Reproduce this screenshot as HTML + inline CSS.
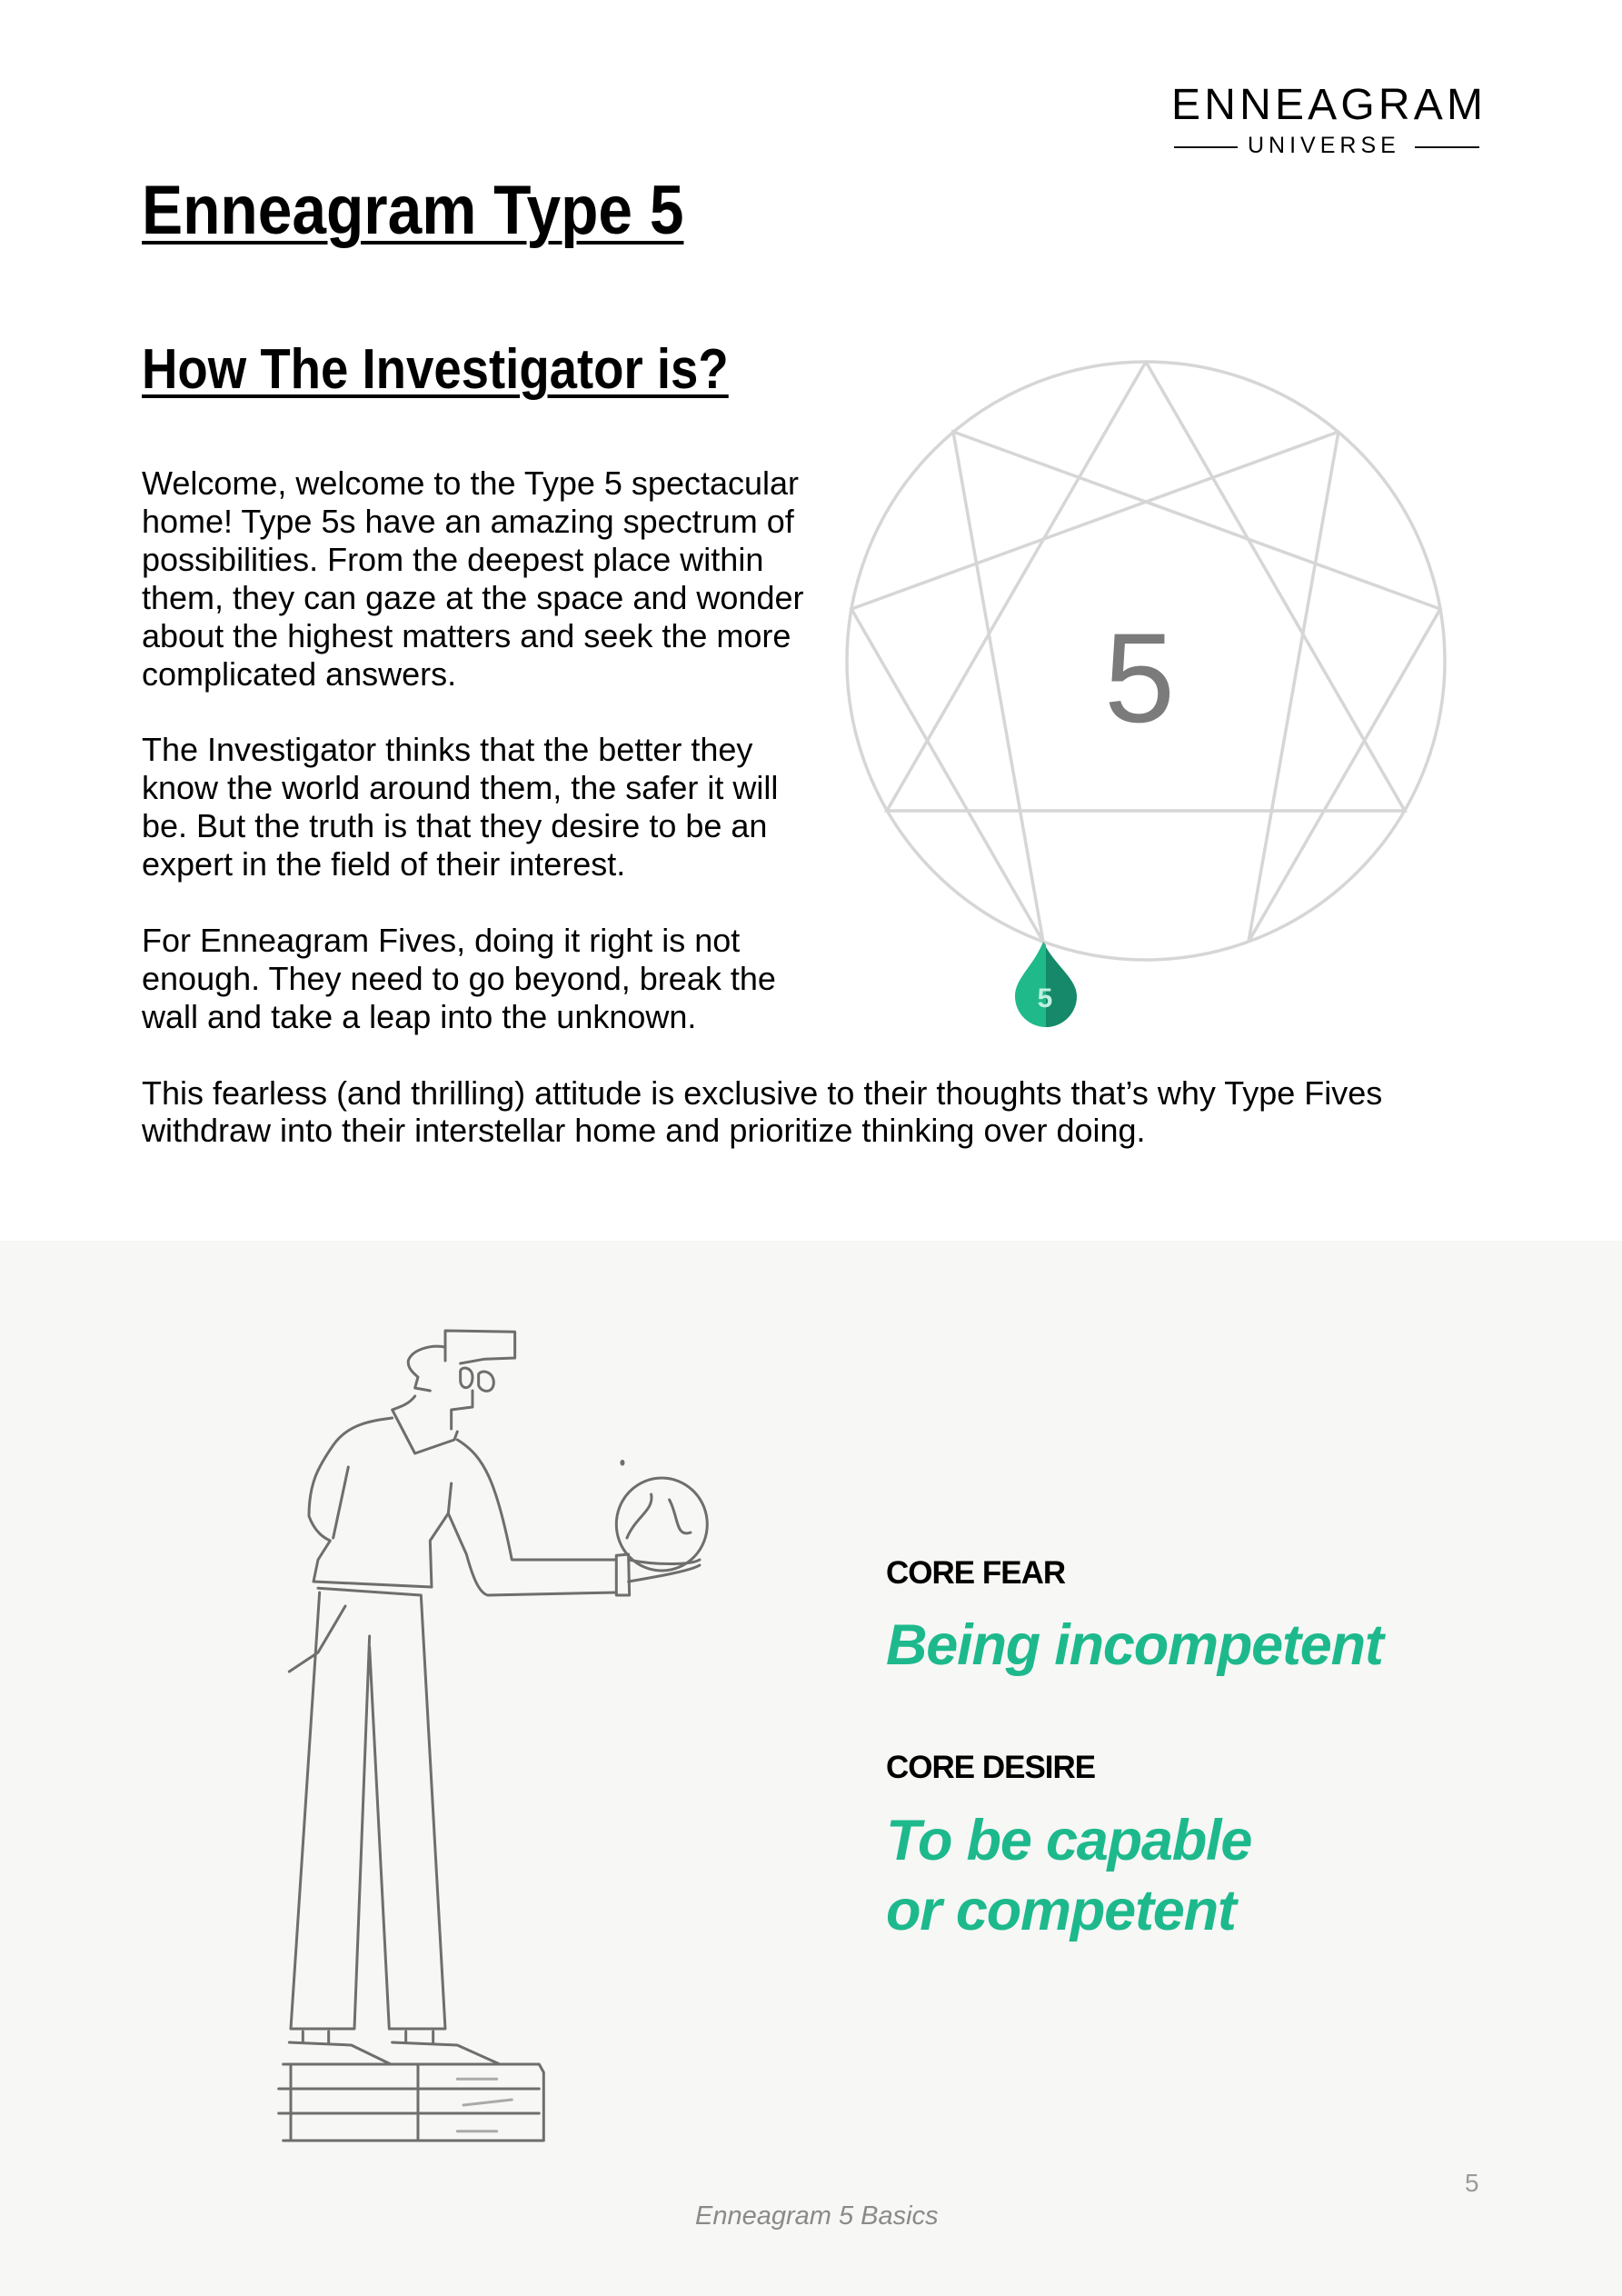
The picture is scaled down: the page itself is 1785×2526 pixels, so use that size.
<!DOCTYPE html>
<html><head><meta charset="utf-8">
<style>
*{margin:0;padding:0;box-sizing:border-box}
html,body{width:1785px;height:2526px;overflow:hidden;background:#fff}
body{position:relative;font-family:"Liberation Sans",Arial,sans-serif;color:#000}
.abs{position:absolute;white-space:nowrap}
#gray{position:absolute;left:0;top:1365px;width:1785px;height:1161px;background:#f7f7f5}
.logo{left:1289px;top:92px;font-size:48px;letter-spacing:4.2px;line-height:48px}
.uni{left:1373px;top:148px;font-size:25px;letter-spacing:5px;line-height:25px}
.h1{left:156px;top:194px;font-size:76px;line-height:76px;font-weight:bold;text-decoration:underline;text-decoration-thickness:4px;text-underline-offset:8px;transform:scaleX(0.89);transform-origin:left top}
.h2{left:156px;top:376px;font-size:62px;line-height:62px;font-weight:bold;text-decoration:underline;text-decoration-thickness:4px;text-underline-offset:7px;transform:scaleX(0.88);transform-origin:left top}
.body{left:156px;top:511px;font-size:36px;line-height:41.9px}
.lab{left:975px;font-size:35px;line-height:35px;font-weight:bold;letter-spacing:-1px}
.big{left:975px;font-size:63px;line-height:77px;font-weight:bold;font-style:italic;color:#1db98c;letter-spacing:-1.2px}
.foot{left:765px;top:2424px;font-size:29px;line-height:29px;font-style:italic;color:#8a8a8a}
.pn{left:1612px;top:2388px;font-size:28px;line-height:28px;color:#9a9a9a}
</style></head>
<body>
<div id="gray"></div>

<div class="abs logo">ENNEAGRAM</div>
<div class="abs" style="left:1292px;top:161px;width:70px;height:2px;background:#111"></div>
<div class="abs uni">UNIVERSE</div>
<div class="abs" style="left:1557px;top:161px;width:71px;height:2px;background:#111"></div>

<div class="abs h1">Enneagram Type 5</div>
<div class="abs h2">How The Investigator is?</div>

<div class="abs body">Welcome, welcome to the Type 5 spectacular<br>home! Type 5s have an amazing spectrum of<br>possibilities. From the deepest place within<br>them, they can gaze at the space and wonder<br>about the highest matters and seek the more<br>complicated answers.<br><br>The Investigator thinks that the better they<br>know the world around them, the safer it will<br>be. But the truth is that they desire to be an<br>expert in the field of their interest.<br><br>For Enneagram Fives, doing it right is not<br>enough. They need to go beyond, break the<br>wall and take a leap into the unknown.<br><br>This fearless (and thrilling) attitude is exclusive to their thoughts that’s why Type Fives<br>withdraw into their interstellar home and prioritize thinking over doing.</div>

<svg class="abs" style="left:0;top:0" width="1785" height="1365" viewBox="0 0 1785 1365">
 <g fill="none" stroke="#d6d6d6" stroke-width="3.5">
  <circle cx="1261" cy="727" r="329"/>
  <polyline points="1261,398 1546,892 976,892 1261,398"/>
  <polyline points="1473,475 1374,1036 1585,670 1049,475 1148,1036 937,670 1473,475"/>
 </g>
 <text x="1254" y="794" font-family="Liberation Sans, Arial, sans-serif" font-size="140" fill="#7b7b7b" text-anchor="middle">5</text>
 <path d="M1148,1036 C1160,1062 1185,1076 1185,1096 A34,34 0 1 1 1117,1096 C1117,1076 1138,1062 1148,1036 Z" fill="#1fb98a"/>
 <path d="M1148,1036 C1160,1062 1185,1076 1185,1096 A34,34 0 0 1 1151,1130 L1151,1040 Z" fill="#15896a"/>
 <text x="1150" y="1108" font-family="Liberation Sans, Arial, sans-serif" font-size="30" font-weight="bold" fill="#bff0de" text-anchor="middle">5</text>
</svg>

<svg class="abs" style="left:0;top:0" width="1785" height="2526" viewBox="0 0 1785 2526">
 <g transform="translate(300,1440) scale(0.3333,0.6)" fill="none" stroke="#6e6e6e" stroke-width="3" stroke-linejoin="round" stroke-linecap="round">
  <path vector-effect="non-scaling-stroke" d="M570,95 L570,40 L800,42 L800,90 L700,92 L620,100"/>
  <path vector-effect="non-scaling-stroke" d="M570,70 C520,65 460,75 448,95 C445,110 470,120 480,125 L470,145 L520,150"/>
  <path vector-effect="non-scaling-stroke" d="M620,115 C620,105 660,105 660,125 C660,150 620,150 620,130 Z M680,120 C690,110 730,115 730,135 C730,155 690,155 680,140 Z"/>
  <path vector-effect="non-scaling-stroke" d="M660,150 L660,180 L590,185 L590,220"/>
  <path vector-effect="non-scaling-stroke" d="M470,160 C450,175 420,180 395,185 L470,265 L600,240 L610,225"/>
  <path vector-effect="non-scaling-stroke" d="M395,200 C330,205 250,210 200,250 C150,290 120,320 120,380 C140,410 170,420 190,425 L150,460 L135,500 L525,510 L520,425 L580,375 L590,320"/>
  <path vector-effect="non-scaling-stroke" d="M250,290 L200,420"/>
  <path vector-effect="non-scaling-stroke" d="M610,240 C700,270 740,320 790,460 L1130,460"/>
  <path vector-effect="non-scaling-stroke" d="M580,375 L640,450 C660,490 680,520 710,525 L1135,520"/>
  <path vector-effect="non-scaling-stroke" d="M1135,452 L1175,450 L1178,525 L1135,525 Z"/>
  <path vector-effect="non-scaling-stroke" d="M1175,460 C1260,470 1380,470 1410,460 M1175,500 C1280,490 1380,480 1410,470"/>
  <ellipse vector-effect="non-scaling-stroke" cx="1285" cy="395" rx="150" ry="85"/>
  <path vector-effect="non-scaling-stroke" d="M1170,420 C1200,380 1260,370 1250,340 M1310,350 C1340,380 1330,420 1380,410"/>
  <circle vector-effect="non-scaling-stroke" cx="1155" cy="282" r="3" fill="#6e6e6e"/>
  <path vector-effect="non-scaling-stroke" d="M150,512 L490,525 M155,520 L60,1320 L270,1320 L320,600 M320,620 L385,1320 L570,1320 L490,525"/>
  <path vector-effect="non-scaling-stroke" d="M240,545 L150,630 L55,665"/>
  <path vector-effect="non-scaling-stroke" d="M100,1325 L100,1345 M185,1325 L185,1345 M440,1325 L440,1345 M530,1325 L530,1345"/>
  <path vector-effect="non-scaling-stroke" d="M55,1345 L260,1350 L390,1385 M395,1345 L610,1350 L750,1385"/>
  <path vector-effect="non-scaling-stroke" d="M35,1385 L880,1385 L895,1400 L895,1525 L35,1525 M20,1430 L880,1430 M20,1475 L880,1475 M60,1385 L60,1525 M480,1385 L480,1525"/>
  <path vector-effect="non-scaling-stroke" d="M610,1412 L740,1412 M630,1460 L790,1450 M610,1508 L740,1508" stroke="#aaa"/>
 </g>
</svg>

<div class="abs lab" style="top:1713px">CORE FEAR</div>
<div class="abs big" style="top:1772px">Being incompetent</div>
<div class="abs lab" style="top:1927px">CORE DESIRE</div>
<div class="abs big" style="top:1987px">To be capable<br>or competent</div>

<div class="abs pn">5</div>
<div class="abs foot">Enneagram 5 Basics</div>
</body></html>
